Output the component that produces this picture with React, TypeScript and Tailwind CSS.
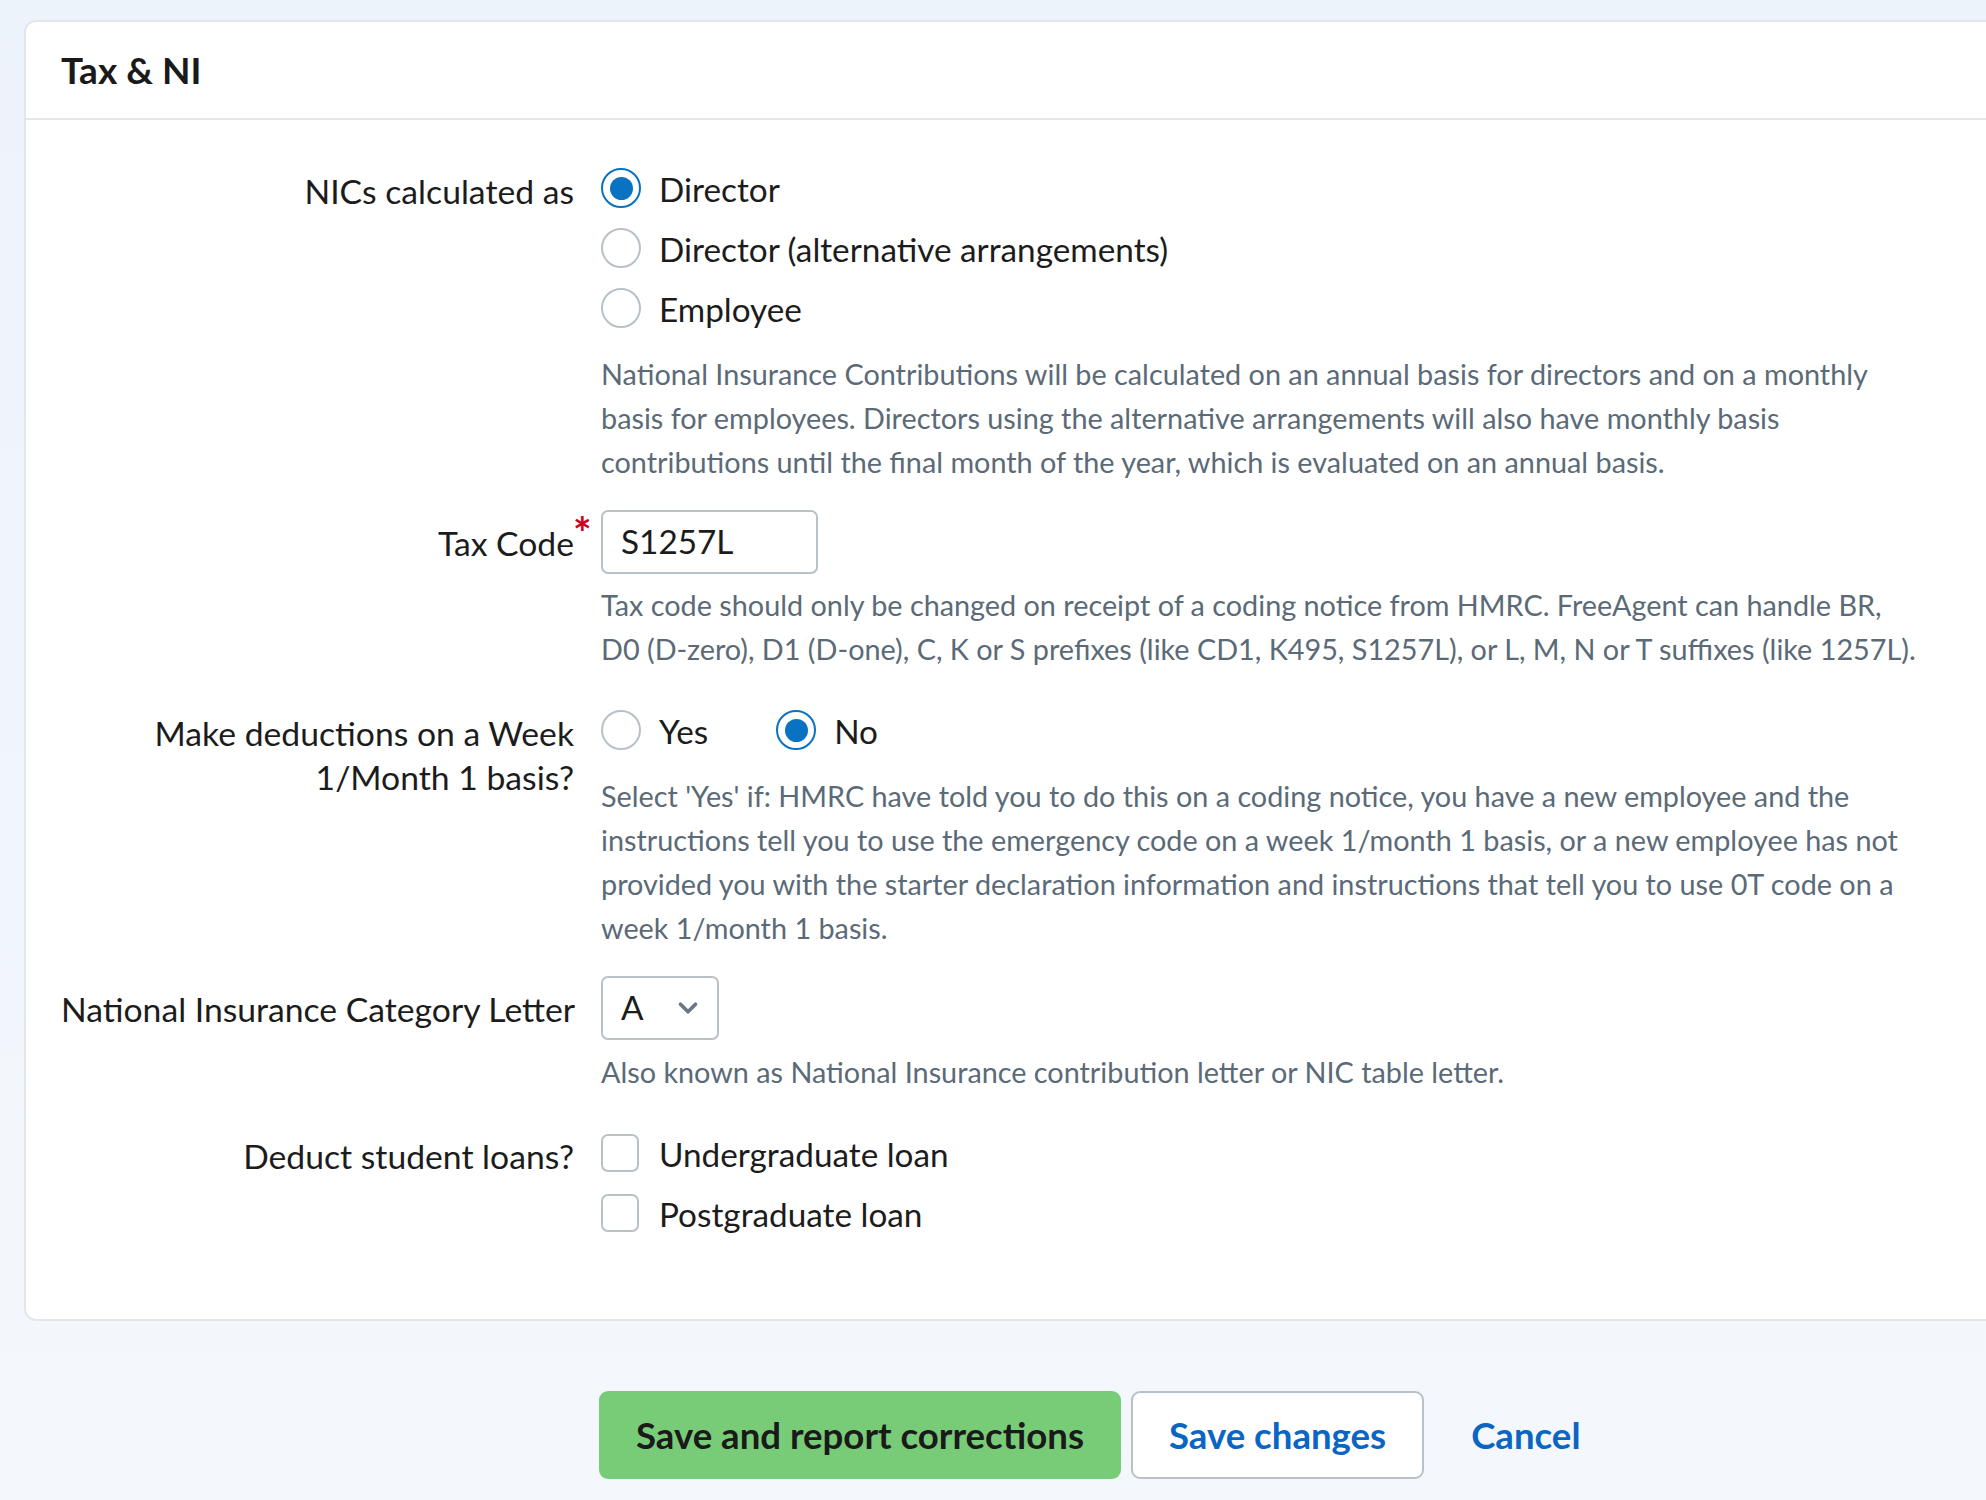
import { ChevronDown } from "lucide-react";

const FONT = { fontFamily: "Lato, 'Open Sans', sans-serif" };

function Radio({ checked, label }: { checked?: boolean; label: string }) {
  return (
    <label className="flex h-[60px] items-center gap-[18px]">
      {checked ? (
        <span className="flex h-[40px] w-[40px] items-center justify-center rounded-full border-[2.5px] border-[#0a72c2] bg-white">
          <span className="h-[23px] w-[23px] rounded-full bg-[#0a72c2]" />
        </span>
      ) : (
        <span className="h-[40px] w-[40px] rounded-full border-2 border-[#b9c1c8] bg-white" />
      )}
      <span className="pt-[3px] text-[33.3px] text-[#1c1c1c]">{label}</span>
    </label>
  );
}

function Checkbox({ label }: { label: string }) {
  return (
    <label className="flex h-[60px] items-center gap-[20px]">
      <span className="h-[38px] w-[38px] rounded-[7px] border-2 border-[#b9c1c8] bg-white" />
      <span className="pt-[3px] text-[33.3px] text-[#1c1c1c]">{label}</span>
    </label>
  );
}

function Hint({ lines, className }: { lines: string[]; className?: string }) {
  return (
    <div className={"text-[28.8px] leading-[44px] text-[#5b6a77] " + (className ?? "")}>
      {lines.map((l) => (
        <div key={l} className="whitespace-nowrap">
          {l}
        </div>
      ))}
    </div>
  );
}

function Row({ label, children, className }: { label: React.ReactNode; children: React.ReactNode; className?: string }) {
  return (
    <div className={"grid grid-cols-[513px_1fr] gap-x-[27px] " + (className ?? "")}>
      <div className="whitespace-nowrap pt-[11px] text-right text-[33.7px] leading-[44px] text-[#1c1c1c]">{label}</div>
      <div>{children}</div>
    </div>
  );
}

export default function App() {
  return (
    <div style={FONT} className="min-h-[1500px] w-full overflow-hidden bg-gradient-to-b from-[#edf3fb] to-[#f4f8fd] pl-[24px] pt-[20px]">
      <div className="w-[calc(100%+24px)] rounded-xl border-2 border-[#e2e7ee] bg-white">
        <div className="flex h-[98px] items-center border-b-2 border-[#e2e7ee] pl-[35px]">
          <h2 className="text-[37px] font-bold text-[#1a1a1a]">Tax &amp; NI</h2>
        </div>

        <div className="pb-[76px] pl-[35px] pt-[38px]">
          <Row label="NICs calculated as">
            <Radio checked label="Director" />
            <Radio label="Director (alternative arrangements)" />
            <Radio label="Employee" />
            <Hint
              className="mt-[14px]"
              lines={[
                "National Insurance Contributions will be calculated on an annual basis for directors and on a monthly",
                "basis for employees. Directors using the alternative arrangements will also have monthly basis",
                "contributions until the final month of the year, which is evaluated on an annual basis.",
              ]}
            />
          </Row>

          <Row
            className="mt-[26px]"
            label={
              <span className="relative">
                Tax Code
                <span className="absolute left-full -top-[13px] -ml-[1px] text-[44px] font-bold leading-none text-[#d0021b]">*</span>
              </span>
            }
          >
            <div className="flex h-[64px] w-[217px] items-center rounded-[7px] border-2 border-[#b9c1c8] px-[18px] text-[33.3px] text-[#1c1c1c]">
              S1257L
            </div>
            <Hint
              className="mt-[9px]"
              lines={[
                "Tax code should only be changed on receipt of a coding notice from HMRC. FreeAgent can handle BR,",
                "D0 (D-zero), D1 (D-one), C, K or S prefixes (like CD1, K495, S1257L), or L, M, N or T suffixes (like 1257L).",
              ]}
            />
          </Row>

          <Row
            className="mt-[29px]"
            label={
              <>
                <div>Make deductions on a Week</div>
                <div>1/Month 1 basis?</div>
              </>
            }
          >
            <div className="flex gap-[68px]">
              <Radio label="Yes" />
              <Radio checked label="No" />
            </div>
            <Hint
              className="mt-[14px]"
              lines={[
                "Select 'Yes' if: HMRC have told you to do this on a coding notice, you have a new employee and the",
                "instructions tell you to use the emergency code on a week 1/month 1 basis, or a new employee has not",
                "provided you with the starter declaration information and instructions that tell you to use 0T code on a",
                "week 1/month 1 basis.",
              ]}
            />
          </Row>

          <Row className="mt-[26px]" label="National Insurance Category Letter">
            <div className="flex h-[64px] w-[118px] items-center justify-between rounded-[7px] border-2 border-[#b9c1c8] pl-[18px] pr-[14px] text-[33.3px] text-[#1c1c1c]">
              <span>A</span>
              <ChevronDown size={30} strokeWidth={3} className="text-[#6b7784]" />
            </div>
            <Hint className="mt-[10px]" lines={["Also known as National Insurance contribution letter or NIC table letter."]} />
          </Row>

          <Row className="mt-[29px]" label="Deduct student loans?">
            <Checkbox label="Undergraduate loan" />
            <Checkbox label="Postgraduate loan" />
          </Row>
        </div>
      </div>

      <div className="mt-[70px] flex items-center pl-[575px]">
        <button className="h-[88px] rounded-[9px] bg-[#78cc78] px-[37px] text-[36.6px] font-bold text-[#1a1a1a]">
          Save and report corrections
        </button>
        <button className="ml-[10px] h-[88px] rounded-[9px] border-2 border-[#b9c1c8] bg-white px-[36px] text-[36.6px] font-bold text-[#0a66c2]">
          Save changes
        </button>
        <button className="ml-[47px] text-[36.6px] font-bold text-[#0a66c2]">Cancel</button>
      </div>
    </div>
  );
}
